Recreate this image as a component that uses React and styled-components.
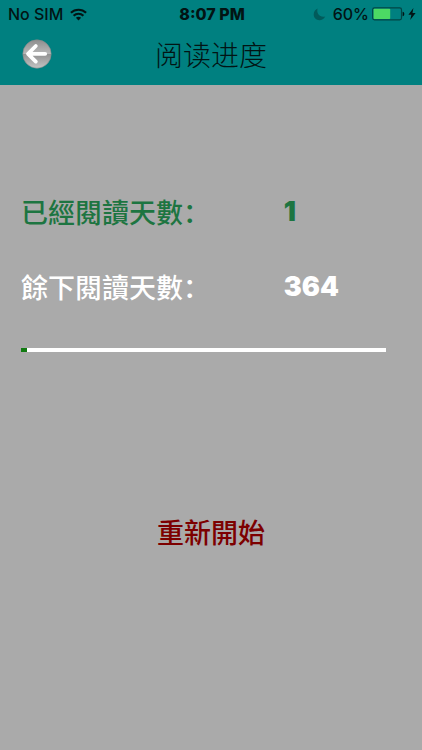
import React from 'react';
import styled, { createGlobalStyle } from 'styled-components';

const TOTAL_DAYS = 365;
const READ_DAYS = 1;

const App = () => {
  const percent = Math.max(1.6, (READ_DAYS / TOTAL_DAYS) * 100);

  return (
    <Page>
      <GlobalStyle />
      <Header>
        <StatusBar>
          <StatusGroup>
            <span>No SIM</span>
            <WifiIcon />
          </StatusGroup>
          <Clock>8:07 PM</Clock>
          <StatusGroup $end>
            <MoonIcon />
            <Percent>60%</Percent>
            <BatteryIcon />
            <BoltIcon />
          </StatusGroup>
        </StatusBar>
        <NavBar>
          <BackButton type="button" aria-label="返回">
            <BackIcon />
          </BackButton>
          <Title>阅读进度</Title>
        </NavBar>
      </Header>
      <Content>
        <Stats>
          <StatRow $color="#1d7541">
            <StatLabel>已經閱讀天數：</StatLabel>
            <StatValue>{READ_DAYS}</StatValue>
          </StatRow>
          <StatRow $color="#fff">
            <StatLabel>餘下閱讀天數：</StatLabel>
            <StatValue>{TOTAL_DAYS - READ_DAYS}</StatValue>
          </StatRow>
        </Stats>
        <Track
          role="progressbar"
          aria-label="阅读进度"
          aria-valuemin={0}
          aria-valuemax={TOTAL_DAYS}
          aria-valuenow={READ_DAYS}
        >
          <Fill style={{ width: `${percent}%` }} />
        </Track>
        <RestartButton type="button">重新開始</RestartButton>
      </Content>
    </Page>
  );
};

const WifiIcon = () => (
  <svg width="17" height="13" viewBox="0 0 17 13" fill="none" stroke="#021414" strokeWidth="2.2">
    <path d="M0.9 4.8C5.1 0.7 11.9 0.7 16.1 4.8" />
    <path d="M3.6 7.7C6.3 5.1 10.7 5.1 13.4 7.7" />
    <path d="M8.5 12.4L5.9 9.8C7.4 8.5 9.6 8.5 11.1 9.8Z" fill="#021414" stroke="none" />
  </svg>
);

const MoonIcon = () => (
  <svg width="13" height="13" viewBox="0 0 13 13">
    <path d="M4.6 0.6C3.2 5.6 6.8 9.8 12.2 8.6C10.9 11.1 8.8 12.3 6.4 12.3C3.1 12.3 0.7 9.8 0.7 6.6C0.7 3.9 2.3 1.5 4.6 0.6Z" fill="#015b5b" />
  </svg>
);

const BatteryIcon = () => (
  <svg width="33" height="14" viewBox="0 0 33 14">
    <rect x="0.7" y="0.9" width="28.8" height="12" rx="1.8" fill="none" stroke="#024444" strokeWidth="1.2" />
    <rect x="1.6" y="1.8" width="16.6" height="10.2" rx="0.8" fill="#4cd964" />
    <path d="M30.6 4.8C32.9 5 32.9 9 30.6 9.2Z" fill="#021414" />
  </svg>
);

const BoltIcon = () => (
  <svg width="8" height="12" viewBox="0 0 8 12">
    <path d="M5.4 0L0.4 6.7H3.4L2.2 12L7.6 4.9H4.5Z" fill="#021414" />
  </svg>
);

const BackIcon = () => (
  <svg width="30" height="30" viewBox="0 0 30 30">
    <defs>
      <linearGradient id="ball" x1="0" y1="0" x2="0" y2="1">
        <stop offset="0" stopColor="#8e8e8e" />
        <stop offset="0.49" stopColor="#b8b8b8" />
        <stop offset="0.51" stopColor="#929292" />
        <stop offset="1" stopColor="#c4c4c4" />
      </linearGradient>
    </defs>
    <circle cx="15" cy="15" r="14.2" fill="url(#ball)" stroke="#7f8a8a" strokeWidth="0.6" />
    <path d="M13.8 7L6 14.8L13.8 22.6M6.4 14.8H23.2" fill="none" stroke="#fff" strokeWidth="3.8" strokeLinecap="round" strokeLinejoin="round" />
  </svg>
);

const GlobalStyle = createGlobalStyle`
  * {
    box-sizing: border-box;
  }
  body {
    margin: 0;
    background: #aaa;
    font-family: Inter, "Noto Sans CJK TC", sans-serif;
  }
  svg {
    display: block;
    flex: none;
  }
`;

const Page = styled.div`
  min-height: 100vh;
  background: #aaa;
`;

const Header = styled.header`
  background: #008080;
  color: #021414;
`;

const StatusBar = styled.div`
  display: grid;
  grid-template-columns: 1fr auto 1fr;
  align-items: center;
  height: 28px;
  padding: 0 6px 0 8px;
  font-size: 16px;
  font-weight: 500;
  line-height: 20px;
  white-space: nowrap;
`;

const StatusGroup = styled.div`
  display: flex;
  align-items: center;
  justify-content: ${({ $end }) => ($end ? 'flex-end' : 'flex-start')};
  gap: ${({ $end }) => ($end ? '3px' : '7px')};
`;

const Clock = styled.span`
  font-weight: 800;
`;

const Percent = styled.span`
  margin-left: 4px;
`;

const NavBar = styled.div`
  display: grid;
  grid-template-columns: 56px 1fr 56px;
  align-items: center;
  height: 57px;
  padding-bottom: 5px;
`;

const BackButton = styled.button`
  justify-self: end;
  margin-right: 4px;
  padding: 0;
  border: none;
  background: none;
  cursor: pointer;
`;

const Title = styled.h1`
  margin: 0;
  font-family: "Noto Sans CJK SC", sans-serif;
  font-size: 28px;
  font-weight: 300;
  line-height: 40px;
  text-align: center;
`;

const Content = styled.main`
  display: flex;
  flex-direction: column;
  padding: 107px 36px 0 21px;
`;

const Stats = styled.div`
  display: grid;
  gap: 35px;
`;

const StatRow = styled.div`
  display: grid;
  grid-template-columns: 18fr 7fr;
  align-items: center;
  color: ${({ $color }) => $color};
  font-size: 27px;
  line-height: 40px;
`;

const StatLabel = styled.span`
  font-family: "Noto Sans CJK SC", sans-serif;
  font-weight: 500;
  white-space: nowrap;
`;

const StatValue = styled.span`
  font-weight: 900;
`;

const Track = styled.div`
  height: 4px;
  margin-top: 41px;
  background: #fff;
`;

const Fill = styled.div`
  height: 100%;
  background: #117a11;
`;

const RestartButton = styled.button`
  align-self: center;
  margin: 160px 0 0 15px;
  padding: 0;
  border: none;
  background: none;
  color: #7d0000;
  font-family: "Noto Sans CJK TC", sans-serif;
  font-size: 27px;
  font-weight: 500;
  line-height: 40px;
  cursor: pointer;
`;

export default App;
